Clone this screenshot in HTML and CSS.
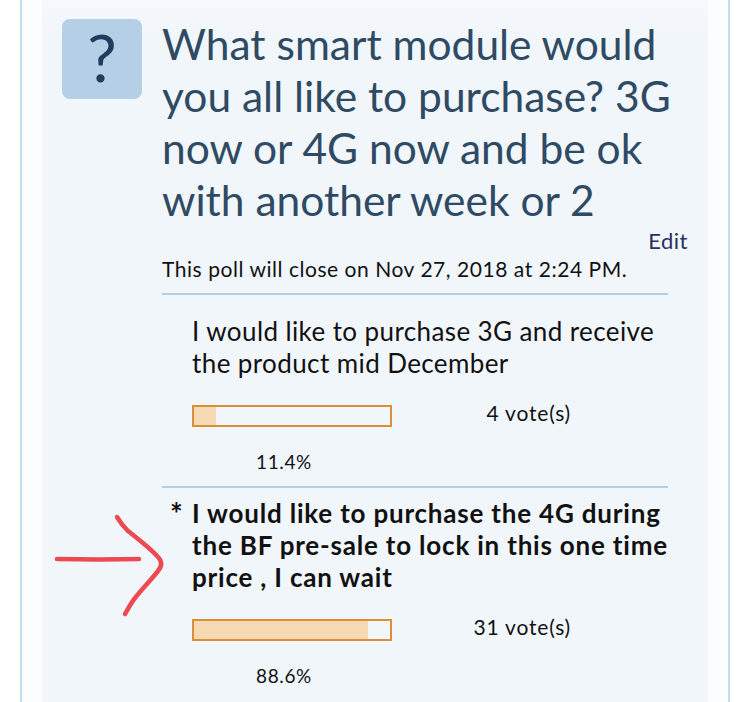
FILE: index.html
```html
<!DOCTYPE html>
<html lang="en">
<head>
    <meta charset="UTF-8">
    <meta name="viewport" content="width=device-width, initial-scale=1.0">
    <title>Poll</title>
    <link rel="stylesheet" href="styles.css">
</head>
<body>
    <div class="frame">
        <div class="panel">
            <div class="poll-head">
                <div class="poll-icon">?</div>
                <div class="poll-main">
                    <h2 class="poll-title">What smart module would you all like to purchase? 3G now or 4G now and be ok with another week or 2</h2>
                    <div class="poll-edit"><a href="#">Edit</a></div>
                    <p class="poll-close">This poll will close on Nov 27, 2018 at 2:24 PM.</p>
                    <div class="option">
                        <p class="option-text">I would like to purchase 3G and receive the product mid December</p>
                        <div class="option-stats">
                            <div class="bar"><div class="bar-fill" style="width: 11.4%"></div></div>
                            <div class="votes">4 vote(s)</div>
                        </div>
                        <div class="percent">11.4%</div>
                    </div>
                    <div class="option chosen">
                        <p class="option-text"><span class="star">*</span>I would like to purchase the 4G during the BF pre-sale to lock in this one time price , I can wait</p>
                        <div class="option-stats">
                            <div class="bar"><div class="bar-fill" style="width: 88.6%"></div></div>
                            <div class="votes">31 vote(s)</div>
                        </div>
                        <div class="percent">88.6%</div>
                    </div>
                </div>
            </div>
        </div>
        <!-- hand drawn arrow on top of the screenshot -->
        <svg class="scribble" width="120" height="115" viewBox="0 0 120 115">
            <path d="M3 53 C30 53.500 60 53.500 85 53" />
            <path d="M63 11 C66 16 70 21 74 25 C84 33 96 42 104 51 C108 55 108 60 104 65 C97 74 88 83 81 92 C77 97 74 103 71 108" />
        </svg>
    </div>
</body>
</html>
```

FILE: styles.css
```css
body {
    font-family: Lato, "Open Sans", Arial, sans-serif;
    margin: 0;
    color: #111;
    background: #fff;
    overflow: hidden;
}
.frame {
    position: relative;
    margin: 0 20px;
    padding: 0 20px;
    height: 702px;
    box-sizing: border-box;
    border-left: 2px solid #c5dcef;
    border-right: 2px solid #c5dcef;
    background: #fcfdff;
}
.panel {
    height: 100%;
    box-sizing: border-box;
    padding: 19px 40px 0 20px;
    background: linear-gradient(#f6f9fd, #f1f6fb 40px);
}
.poll-head {
    display: flex;
    gap: 20px;
}
.poll-icon {
    flex: none;
    width: 80px;
    height: 80px;
    border-radius: 8px;
    background: #b5cfe6;
    color: #1f3d5c;
    font-size: 66px;
    line-height: 76px;
    text-align: center;
}
.poll-main {
    flex: 1;
}
.poll-title {
    margin: -1px -20px 0 0;
    font-size: 42.500px;
    font-weight: 400;
    line-height: 52px;
    color: #2f4a63;
}
.poll-edit {
    text-align: right;
    margin: 3px -20px 0 0;
    font-size: 22px;
    letter-spacing: 0.5px;
    line-height: 24px;
}
.poll-edit a {
    color: #2a2f5e;
    text-decoration: none;
}
.poll-close {
    margin: 4px 0 0;
    font-size: 21px;
    letter-spacing: 0.54px;
    line-height: 24px;
}
.option {
    margin-top: 12px;
    padding: 20px 0 0 30px;
    border-top: 2px solid #b3cfe6;
}
.chosen {
    padding-top: 9px;
}
.option-text {
    margin: 0;
    font-size: 26px;
    letter-spacing: 0.4px;
    line-height: 32px;
    position: relative;
}
.chosen .option-text {
    font-weight: 700;
    letter-spacing: 0.8px;
}
.star {
    position: absolute;
    left: -22px;
    top: 0;
    font-size: 30px;
}
.option-stats {
    display: flex;
    margin-top: 26px;
    align-items: flex-start;
}
.bar {
    width: 200px;
    height: 22px;
    box-sizing: border-box;
    border: 2px solid #dd8f36;
}
.bar-fill {
    height: 100%;
    background: #f5d9b5;
}
.votes {
    width: 179px;
    text-align: right;
    font-size: 21px;
    letter-spacing: 0.8px;
    line-height: 16px;
}
.percent {
    width: 184px;
    margin-top: 23px;
    text-align: center;
    font-size: 19px;
    letter-spacing: 0.6px;
    line-height: 24px;
}
.scribble {
    position: absolute;
    left: 32px;
    top: 506px;
    fill: none;
    stroke: #eb4a50;
    stroke-width: 4.500px;
    stroke-linecap: round;
    stroke-linejoin: round;
}
```
